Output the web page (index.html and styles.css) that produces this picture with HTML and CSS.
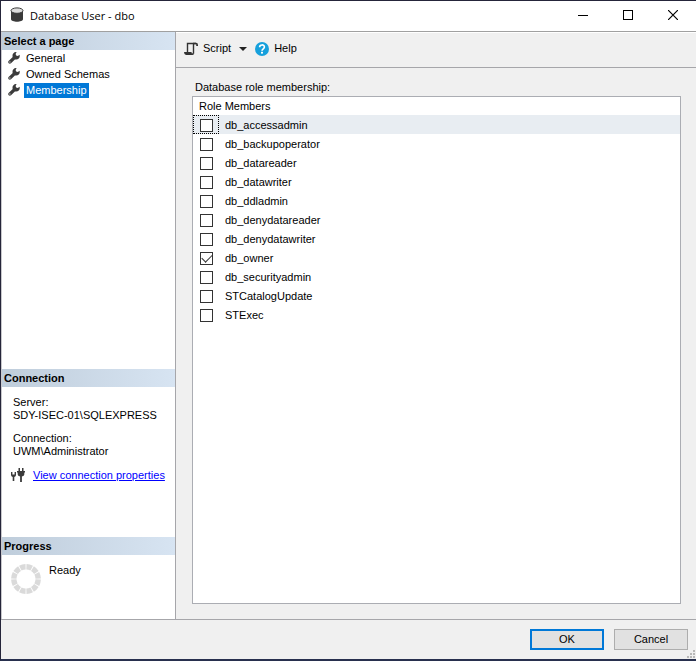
FILE: index.html
```html
<!DOCTYPE html>
<html lang="en">
<head>
    <meta charset="UTF-8">
    <meta name="viewport" content="width=device-width, initial-scale=1.0">
    <title>Database User - dbo</title>
    <link rel="stylesheet" href="styles.css">
</head>
<body>
    <svg class="defs" aria-hidden="true">
        <symbol id="wrench" viewBox="0 0 12 12">
            <path d="M8.6 0 L7.6 2 L8.2 3.6 L9.8 4 L11.6 2.8 C12.3 5.6 10.4 7.9 7.6 7.5 L6.9 7.4 L3 11.2 C1.5 12.6 -0.7 10.6 0.6 9 L4.7 5.1 C3.8 2.2 5.8 -0.2 8.6 0 Z" fill="#3b3b3b"/>
            <rect x="1.4" y="9.5" width="1" height="1" fill="#ffffff"/>
        </symbol>
    </svg>

    <div class="window">
        <header class="titlebar">
            <svg class="app-icon" width="14" height="16" viewBox="0 0 14 16">
                <path d="M1 3.5 V12 C1 15.6 13 15.6 13 12 V3.5 Z" fill="#3a3a3a"/>
                <ellipse cx="7" cy="3.6" rx="6" ry="2.7" fill="#dcdcdc" stroke="#3a3a3a"/>
            </svg>
            <h1 class="title">Database User - dbo</h1>
            <div class="window-controls">
                <button type="button" aria-label="Minimize">
                    <svg width="10" height="10" viewBox="0 0 10 10"><path d="M0 5.5 H10" stroke="#000"/></svg>
                </button>
                <button type="button" aria-label="Maximize">
                    <svg width="10" height="10" viewBox="0 0 10 10"><rect x="0.5" y="0.5" width="9" height="9" fill="none" stroke="#000"/></svg>
                </button>
                <button type="button" aria-label="Close">
                    <svg width="10" height="10" viewBox="0 0 10 10"><path d="M0 0 L10 10 M10 0 L0 10" stroke="#000" stroke-width="1.2"/></svg>
                </button>
            </div>
        </header>

        <div class="content">
            <aside class="sidebar">
                <section class="pages">
                    <h2>Select a page</h2>
                    <nav>
                        <a href="#general"><svg width="12" height="12"><use href="#wrench"/></svg><span>General</span></a>
                        <a href="#schemas"><svg width="12" height="12"><use href="#wrench"/></svg><span>Owned Schemas</span></a>
                        <a href="#membership" class="selected"><svg width="12" height="12"><use href="#wrench"/></svg><span>Membership</span></a>
                    </nav>
                </section>

                <section class="connection">
                    <h2>Connection</h2>
                    <dl>
                        <dt>Server:</dt>
                        <dd>SDY-ISEC-01\SQLEXPRESS</dd>
                        <dt>Connection:</dt>
                        <dd>UWM\Administrator</dd>
                    </dl>
                    <div class="properties">
                        <svg width="14" height="14" viewBox="0 0 14 14" fill="#3b3b3b">
                            <path d="M0 4 H1.4 V6.6 H3.6 V4 H5 V7 Q5 8.6 3.3 9 V13 H1.7 V9 Q0 8.6 0 7 Z"/>
                            <path d="M7.5 0 H9 V3 H11 V0 H12.5 V3 H14 V4.4 H13.3 V6.5 Q13.3 8.2 10.9 8.6 V14 H9.1 V8.6 Q6.7 8.2 6.7 6.5 V4.4 H6 V3 H7.5 Z"/>
                        </svg>
                        <a href="#properties">View connection properties</a>
                    </div>
                </section>

                <section class="progress">
                    <h2>Progress</h2>
                    <div class="status">
                        <svg width="30" height="30" viewBox="0 0 30 30">
                            <circle cx="15" cy="15" r="12.2" fill="none" stroke="#dadada" stroke-width="5.4" pathLength="120" stroke-dasharray="8.6 1.4" stroke-dashoffset="-0.7"/>
                        </svg>
                        <span>Ready</span>
                    </div>
                </section>
            </aside>

            <main class="main">
                <div class="toolbar">
                    <button type="button" class="script">
                        <svg width="14" height="14" viewBox="0 0 14 14">
                            <path d="M3.5 10 V1.5 H12 M9.5 1.5 V11.5" fill="none" stroke="#333" stroke-width="1.4"/>
                            <path d="M0 10 H7.6 V11.2 H10.2 Q10 13 8.6 13 H2 Q0 12.6 0 10 Z M9 0.8 H12 Q14 0.8 14 3 V4 H12.2 V2.2 H9 Z" fill="#333"/>
                        </svg>
                        Script
                    </button>
                    <button type="button" class="drop" aria-label="Script options">
                        <svg width="8" height="4" viewBox="0 0 8 4"><path d="M0 0 H8 L4 4 Z" fill="#222"/></svg>
                    </button>
                    <button type="button" class="help">
                        <svg width="14" height="14" viewBox="0 0 14 14">
                            <circle cx="7" cy="7" r="7" fill="#16a0dc"/>
                            <path d="M4.6 5.2 C4.6 2.2 9.4 2.2 9.4 5 C9.4 6.8 7 6.8 7 8.8" fill="none" stroke="#fff" stroke-width="1.6"/>
                            <rect x="6" y="9.8" width="2" height="1.8" fill="#fff"/>
                        </svg>
                        Help
                    </button>
                </div>

                <div class="roles">
                    <h3 id="roles-label">Database role membership:</h3>
                    <div class="list">
                        <table aria-labelledby="roles-label">
                            <thead>
                                <tr><th colspan="2">Role Members</th></tr>
                            </thead>
                            <tbody>
                                <tr class="current"><td><input type="checkbox" id="accessadmin"></td><td><label for="accessadmin">db_accessadmin</label></td></tr>
                                <tr><td><input type="checkbox" id="backupoperator"></td><td><label for="backupoperator">db_backupoperator</label></td></tr>
                                <tr><td><input type="checkbox" id="datareader"></td><td><label for="datareader">db_datareader</label></td></tr>
                                <tr><td><input type="checkbox" id="datawriter"></td><td><label for="datawriter">db_datawriter</label></td></tr>
                                <tr><td><input type="checkbox" id="ddladmin"></td><td><label for="ddladmin">db_ddladmin</label></td></tr>
                                <tr><td><input type="checkbox" id="denydatareader"></td><td><label for="denydatareader">db_denydatareader</label></td></tr>
                                <tr><td><input type="checkbox" id="denydatawriter"></td><td><label for="denydatawriter">db_denydatawriter</label></td></tr>
                                <tr><td><input type="checkbox" id="owner" checked></td><td><label for="owner">db_owner</label></td></tr>
                                <tr><td><input type="checkbox" id="securityadmin"></td><td><label for="securityadmin">db_securityadmin</label></td></tr>
                                <tr><td><input type="checkbox" id="catalogupdate"></td><td><label for="catalogupdate">STCatalogUpdate</label></td></tr>
                                <tr><td><input type="checkbox" id="exec"></td><td><label for="exec">STExec</label></td></tr>
                            </tbody>
                        </table>
                    </div>
                </div>
            </main>
        </div>

        <footer class="footer">
            <button type="submit" class="btn default">OK</button>
            <button type="button" class="btn">Cancel</button>
            <svg class="grip" width="8" height="8" viewBox="0 0 8 8" fill="#b8b8b8">
                <path d="M6 0h2v2h-2z M3 3h2v2h-2z M6 3h2v2h-2z M0 6h2v2h-2z M3 6h2v2h-2z M6 6h2v2h-2z"/>
            </svg>
        </footer>
    </div>
</body>
</html>
```
FILE: styles.css
```css
* {
    box-sizing: border-box;
}

body {
    margin: 0;
    font-family: "Liberation Sans", Arial, sans-serif;
    font-size: 11px;
    line-height: 13px;
    color: #000;
}

h1, h2, h3, dl, dd {
    margin: 0;
    font-size: inherit;
    font-weight: normal;
}

button {
    font: inherit;
    color: inherit;
    background: none;
    border: 0;
    padding: 0;
}

svg {
    display: block;
    flex: none;
}

.defs {
    position: absolute;
    width: 0;
    height: 0;
}

.window {
    display: flex;
    flex-direction: column;
    min-height: 100vh;
    background: #f0f0f0;
    border-top: 1px solid #25253a;
    border-left: 1px solid #25253a;
    border-bottom: 2px solid #28304e;
}

/* title bar */
.titlebar {
    display: flex;
    align-items: center;
    height: 30px;
    padding: 0 1px 2px 9px;
    background: #fff;
}

.title {
    flex: 1;
    margin-left: 6px;
    font-family: "Open Sans", "Noto Sans", sans-serif;
    font-size: 11px;
}

.window-controls {
    display: flex;
}

.window-controls button {
    display: flex;
    align-items: center;
    justify-content: center;
    width: 45px;
    height: 28px;
}

.content {
    display: flex;
    flex: 1;
    border-top: 1px solid #a0a0a0;
    border-bottom: 1px solid #a6a6aa;
}

/* left panel */
.sidebar {
    display: flex;
    flex-direction: column;
    width: 175px;
    background: #fff;
    border-left: 1px solid #c8c8cc;
    border-right: 1px solid #a6a6aa;
}

.sidebar h2 {
    height: 18px;
    padding-left: 2px;
    font-weight: bold;
    line-height: 18px;
    background: linear-gradient(to right, #bfcddb, #d7e4f2);
}

.pages {
    flex: 1;
}

.connection {
    height: 168px;
}

.progress {
    height: 82px;
}

.pages nav a {
    display: flex;
    align-items: center;
    gap: 4px;
    height: 16px;
    padding-left: 6px;
    color: #000;
    text-decoration: none;
}

.pages nav span {
    padding: 1px 2px;
}

.pages .selected span {
    color: #fff;
    background: #0078d7;
}

.connection dl {
    padding: 9px 11px 0;
}

.connection dd {
    margin-bottom: 10px;
}

.properties {
    display: flex;
    align-items: center;
    gap: 8px;
    padding-left: 9px;
}

.properties a {
    color: #0000ff;
}

.status {
    display: flex;
    gap: 8px;
    padding: 9px;
}

/* right panel */
.main {
    display: flex;
    flex: 1;
    flex-direction: column;
}

.toolbar {
    display: flex;
    align-items: center;
    height: 36px;
    padding: 0 8px 3px;
    border-top: 1px solid #fff;
    border-bottom: 1px solid #a6a6aa;
}

.toolbar button {
    display: flex;
    align-items: center;
    gap: 5px;
}

.toolbar .drop {
    margin: 0 8px;
}

.roles {
    display: flex;
    flex: 1;
    flex-direction: column;
    padding: 13px 15px 15px 16px;
}

.roles h3 {
    padding-left: 3px;
    margin-bottom: 2px;
}

.list {
    flex: 1;
    background: #fff;
    border: 1px solid #abadb3;
}

table {
    width: 100%;
    border-collapse: collapse;
}

th {
    height: 18px;
    padding: 0 6px;
    font-weight: normal;
    text-align: left;
}

td {
    height: 19px;
    padding: 2px 6px 0;
}

td:first-child {
    width: 26px;
    padding-left: 7px;
}

.current {
    background: #e8edf2;
}

.current td:first-child {
    outline: 1px dotted #000;
    outline-offset: -1px;
}

input[type="checkbox"] {
    display: block;
    width: 13px;
    height: 13px;
    margin: 0;
    appearance: none;
    background: #fff;
    border: 1px solid #333;
}

input[type="checkbox"]:checked::before {
    content: "";
    display: block;
    width: 9px;
    height: 5px;
    margin: 1px;
    border-left: 1px solid #333;
    border-bottom: 1px solid #333;
    transform: rotate(-45deg);
}

/* bottom bar */
.footer {
    position: relative;
    display: flex;
    justify-content: flex-end;
    gap: 10px;
    height: 39px;
    padding: 9px 8px;
}

.btn {
    width: 74px;
    height: 21px;
    background: #e1e1e1;
    border: 1px solid #adadad;
}

.btn.default {
    border: 2px solid #0078d7;
}

.grip {
    position: absolute;
    right: 1px;
    bottom: 1px;
}
```
